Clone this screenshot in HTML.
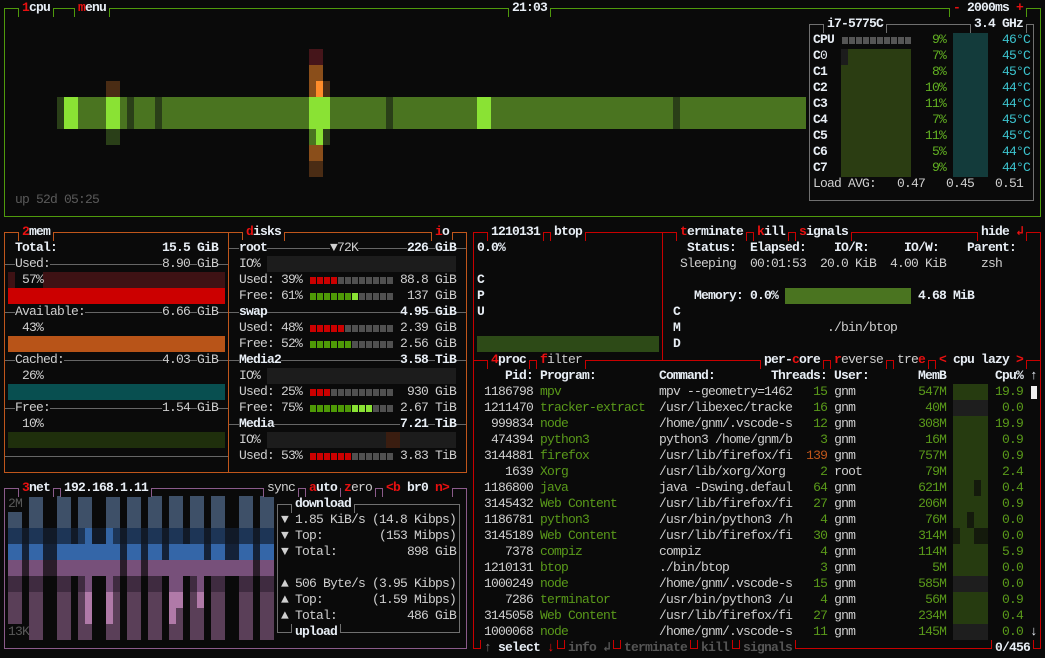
<!DOCTYPE html>
<html><head><meta charset="utf-8"><style>
html,body{margin:0;padding:0;background:#0a0a0a;}
body{width:1045px;height:658px;position:relative;overflow:hidden;}
.t{position:absolute;white-space:pre;font-family:"Liberation Mono","DejaVu Sans Mono",monospace;font-size:13px;letter-spacing:-0.8px;line-height:16px;color:#cfcfcf;}
.w{color:#e8eef5;font-weight:bold;}
.b{font-weight:bold;}
r,.r{color:#e81010;font-weight:bold;}
.gr{color:#5a9a1a;}
.gy{color:#5a5a5a;}
.dim{color:#555;font-weight:bold;}
.cy{color:#3cc4cf;}
.pc{color:#62b022;}
.bg{background:#0a0a0a;}
.box{position:absolute;box-sizing:border-box;border:1px solid;}
.ln{position:absolute;height:1px;}
.vl{position:absolute;width:1px;}
.m{position:absolute;box-sizing:border-box;background:#0a0a0a;border-left:1px solid;border-right:1px solid;height:9px;}
.cg{border-color:#4f9a0c;} .og{border-color:#c0561b;} .pg{border-color:#8b5b8b;} .rg{border-color:#c80000;} .gg{border-color:#707070;}
.rect{position:absolute;}
</style></head><body>

<!-- CPU graph -->
<svg width="1045" height="220" style="position:absolute;left:0;top:0">
<rect x="57" y="97" width="749" height="32" fill="#4a7420"/>
<rect x="57" y="97" width="7" height="32" fill="#2a3f18"/>
<rect x="127" y="97" width="7" height="32" fill="#2a3f18"/>
<rect x="155" y="97" width="7" height="32" fill="#2a3f18"/>
<rect x="386" y="97" width="7" height="32" fill="#2a3f18"/>
<rect x="673" y="97" width="7" height="32" fill="#2a3f18"/>
<rect x="64" y="97" width="14" height="32" fill="#8ae234"/>
<rect x="106" y="97" width="14" height="32" fill="#8ae234"/>
<rect x="477" y="97" width="14" height="32" fill="#8ae234"/>
<rect x="309" y="97" width="21" height="32" fill="#8ae234"/>
<rect x="106" y="81" width="14" height="16" fill="#4a2c14"/>
<rect x="106" y="129" width="14" height="16" fill="#2a3f18"/>
<rect x="309" y="49" width="14" height="16" fill="#45151a"/>
<rect x="309" y="65" width="14" height="16" fill="#8a4e1a"/>
<rect x="309" y="81" width="7" height="16" fill="#8a4e1a"/>
<rect x="316" y="81" width="7" height="16" fill="#ff8c2a"/>
<rect x="323" y="81" width="7" height="16" fill="#4a2c14"/>
<rect x="309" y="129" width="7" height="16" fill="#4a7420"/>
<rect x="316" y="129" width="7" height="16" fill="#8ae234"/>
<rect x="323" y="129" width="7" height="16" fill="#2a3f18"/>
<rect x="309" y="145" width="14" height="16" fill="#8a4e1a"/>
<rect x="309" y="161" width="14" height="16" fill="#4a2c14"/>
<rect x="841" y="49" width="70" height="128" fill="#2b3d12"/>
<rect x="841" y="49" width="7" height="16" fill="#1c1c1c"/>
<rect x="953" y="33" width="35" height="144" fill="#133b3b"/>
<g fill="#555">
<rect x="842" y="37" width="6" height="7"/><rect x="849" y="37" width="6" height="7"/><rect x="856" y="37" width="6" height="7"/><rect x="863" y="37" width="6" height="7"/><rect x="870" y="37" width="6" height="7"/><rect x="877" y="37" width="6" height="7"/><rect x="884" y="37" width="6" height="7"/><rect x="891" y="37" width="6" height="7"/><rect x="898" y="37" width="6" height="7"/><rect x="905" y="37" width="6" height="7"/>
</g>
</svg>

<!-- Net graph -->
<svg width="280" height="160" style="position:absolute;left:0;top:488">
<rect x="8" y="40" width="266" height="16" fill="#111a28"/>
<rect x="8" y="56" width="266" height="16" fill="#142238"/>
<rect x="8" y="72" width="266" height="16" fill="#2a1d2a"/>
<rect x="8" y="24" width="14" height="16" fill="#3e5068"/>
<g fill="#3e5068">
<rect x="29" y="8" width="14" height="32"/><rect x="57" y="8" width="14" height="32"/><rect x="78" y="8" width="14" height="32"/><rect x="106" y="8" width="14" height="32"/><rect x="127" y="8" width="14" height="32"/><rect x="148" y="8" width="14" height="32"/><rect x="169" y="8" width="14" height="32"/><rect x="190" y="8" width="14" height="32"/><rect x="211" y="8" width="14" height="32"/><rect x="239" y="8" width="14" height="32"/><rect x="260" y="8" width="14" height="32"/>
</g>
<g fill="#1d3556">
<rect x="8" y="40" width="14" height="16"/><rect x="29" y="40" width="14" height="16"/><rect x="57" y="40" width="14" height="16"/><rect x="78" y="40" width="14" height="16"/><rect x="106" y="40" width="14" height="16"/><rect x="127" y="40" width="14" height="16"/><rect x="148" y="40" width="14" height="16"/><rect x="169" y="40" width="14" height="16"/><rect x="190" y="40" width="14" height="16"/><rect x="211" y="40" width="14" height="16"/><rect x="239" y="40" width="14" height="16"/><rect x="260" y="40" width="14" height="16"/>
</g>
<rect x="85" y="40" width="7" height="16" fill="#3465a4"/><rect x="106" y="40" width="7" height="16" fill="#3465a4"/>
<g fill="#3466a8">
<rect x="8" y="56" width="14" height="16"/><rect x="29" y="56" width="14" height="16"/><rect x="57" y="56" width="63" height="16"/><rect x="127" y="56" width="14" height="16"/><rect x="148" y="56" width="14" height="16"/><rect x="169" y="56" width="35" height="16"/><rect x="211" y="56" width="14" height="16"/><rect x="239" y="56" width="14" height="16"/><rect x="260" y="56" width="14" height="16"/>
</g>
<g fill="#77507a">
<rect x="8" y="72" width="14" height="16"/><rect x="29" y="72" width="14" height="16"/><rect x="57" y="72" width="63" height="16"/><rect x="127" y="72" width="14" height="16"/><rect x="148" y="72" width="105" height="16"/><rect x="260" y="72" width="14" height="16"/>
</g>
<g fill="#3f2b40">
<rect x="8" y="88" width="14" height="16"/><rect x="29" y="88" width="14" height="16"/><rect x="57" y="88" width="14" height="16"/><rect x="78" y="88" width="14" height="16"/><rect x="106" y="88" width="14" height="16"/><rect x="127" y="88" width="14" height="16"/><rect x="148" y="88" width="14" height="16"/><rect x="169" y="88" width="14" height="16"/><rect x="190" y="88" width="14" height="16"/><rect x="211" y="88" width="14" height="16"/><rect x="239" y="88" width="14" height="16"/><rect x="260" y="88" width="14" height="16"/>
</g>
<rect x="85" y="88" width="7" height="16" fill="#77507a"/><rect x="106" y="88" width="7" height="16" fill="#77507a"/><rect x="169" y="88" width="14" height="16" fill="#77507a"/><rect x="197" y="88" width="7" height="16" fill="#77507a"/>
<g fill="#5a3f58">
<rect x="8" y="104" width="14" height="32"/><rect x="29" y="104" width="14" height="48"/><rect x="57" y="104" width="14" height="48"/><rect x="78" y="104" width="14" height="48"/><rect x="106" y="104" width="14" height="48"/><rect x="127" y="104" width="14" height="48"/><rect x="148" y="104" width="14" height="48"/><rect x="169" y="104" width="14" height="48"/><rect x="190" y="104" width="14" height="48"/><rect x="211" y="104" width="14" height="48"/><rect x="239" y="104" width="14" height="48"/><rect x="260" y="104" width="14" height="48"/>
</g>
<g fill="#b07aa8">
<rect x="85" y="104" width="7" height="32"/><rect x="106" y="104" width="7" height="32"/><rect x="169" y="104" width="14" height="16"/><rect x="169" y="120" width="7" height="16"/><rect x="197" y="104" width="7" height="16"/>
</g>
</svg>

<!-- Boxes and lines -->
<div class="box cg" style="left:4px;top:8px;width:1037px;height:209px"></div>
<div class="box gg" style="left:809px;top:24px;width:225px;height:177px"></div>
<div class="box og" style="left:4px;top:232px;width:463px;height:241px"></div>
<div class="vl" style="left:228px;top:232px;height:241px;background:#c0561b"></div>
<div class="box pg" style="left:4px;top:488px;width:463px;height:161px"></div>
<div class="box gg" style="left:277px;top:504px;width:183px;height:129px"></div>
<div class="box rg" style="left:473px;top:232px;width:568px;height:417px"></div>
<div class="vl" style="left:662px;top:232px;height:129px;background:#c80000"></div>
<div class="ln" style="left:473px;top:360px;width:568px;background:#c80000"></div>

<div class="ln" style="left:5px;top:264px;width:223px;background:#666"></div>
<div class="ln" style="left:5px;top:312px;width:223px;background:#666"></div>
<div class="ln" style="left:5px;top:360px;width:223px;background:#666"></div>
<div class="ln" style="left:5px;top:408px;width:223px;background:#666"></div>
<div class="ln" style="left:5px;top:456px;width:223px;background:#666"></div>
<div class="ln" style="left:229px;top:248px;width:237px;background:#666"></div>
<div class="ln" style="left:229px;top:312px;width:237px;background:#666"></div>
<div class="ln" style="left:229px;top:360px;width:237px;background:#666"></div>
<div class="ln" style="left:229px;top:424px;width:237px;background:#666"></div>

<!-- title masks -->
<div class="m cg" style="left:18px;top:8px;width:36px"></div>
<div class="m cg" style="left:74px;top:8px;width:36px"></div>
<div class="m cg" style="left:508px;top:8px;width:43px"></div>
<div class="m cg" style="left:949px;top:8px;width:78px"></div>
<div class="m gg" style="left:823px;top:24px;width:64px"></div>
<div class="m gg" style="left:970px;top:24px;width:57px"></div>
<div class="m og" style="left:18px;top:232px;width:36px"></div>
<div class="m og" style="left:242px;top:232px;width:43px"></div>
<div class="m og" style="left:431px;top:232px;width:22px"></div>
<div class="m rg" style="left:487px;top:232px;width:57px"></div>
<div class="m rg" style="left:550px;top:232px;width:36px"></div>
<div class="m rg" style="left:676px;top:232px;width:71px"></div>
<div class="m rg" style="left:753px;top:232px;width:36px"></div>
<div class="m rg" style="left:795px;top:232px;width:57px"></div>
<div class="m rg" style="left:977px;top:232px;width:50px"></div>
<div class="m rg" style="left:487px;top:360px;width:43px"></div>
<div class="m rg" style="left:536px;top:360px;width:50px"></div>
<div class="m rg" style="left:760px;top:360px;width:64px"></div>
<div class="m rg" style="left:830px;top:360px;width:57px"></div>
<div class="m rg" style="left:893px;top:360px;width:36px"></div>
<div class="m rg" style="left:935px;top:360px;width:92px"></div>
<div class="m pg" style="left:18px;top:488px;width:36px"></div>
<div class="m pg" style="left:60px;top:488px;width:92px"></div>
<div class="m pg" style="left:263px;top:488px;width:36px"></div>
<div class="m pg" style="left:305px;top:488px;width:36px"></div>
<div class="m pg" style="left:340px;top:488px;width:36px"></div>
<div class="m pg" style="left:382px;top:488px;width:71px"></div>
<div class="m gg" style="left:291px;top:504px;width:64px"></div>
<div class="m gg" style="left:291px;top:624px;width:50px"></div>
<div class="m rg" style="left:480px;top:640px;width:78px"></div>
<div class="m rg" style="left:564px;top:640px;width:50px"></div>
<div class="m rg" style="left:620px;top:640px;width:71px"></div>
<div class="m rg" style="left:697px;top:640px;width:36px"></div>
<div class="m rg" style="left:739px;top:640px;width:57px"></div>
<div class="m rg" style="left:991px;top:640px;width:43px"></div>

<!-- mem bars -->
<div class="rect" style="left:8px;top:272px;width:217px;height:16px;background:#3e1214"></div>
<div class="rect" style="left:15px;top:272px;width:28px;height:16px;background:#0a0a0a"></div>
<div class="rect" style="left:8px;top:288px;width:217px;height:16px;background:#cc0000"></div>
<div class="rect" style="left:8px;top:336px;width:217px;height:16px;background:#b85418"></div>
<div class="rect" style="left:8px;top:384px;width:217px;height:16px;background:#084f50"></div>
<div class="rect" style="left:8px;top:432px;width:217px;height:16px;background:#1f2f0c"></div>
<!-- disk IO bars -->
<div class="rect" style="left:267px;top:256px;width:189px;height:16px;background:#1c1c1c"></div>
<div class="rect" style="left:267px;top:368px;width:189px;height:16px;background:#1c1c1c"></div>
<div class="rect" style="left:267px;top:432px;width:189px;height:16px;background:#1c1c1c"></div>
<div class="rect" style="left:386px;top:432px;width:14px;height:16px;background:#3a1d10"></div>
<!-- disk meters -->
<svg width="1045" height="658" style="position:absolute;left:0;top:0;pointer-events:none">
<defs>
<g id="row12"><rect x="310" y="0" width="6" height="7"/><rect x="317" y="0" width="6" height="7"/><rect x="324" y="0" width="6" height="7"/><rect x="331" y="0" width="6" height="7"/><rect x="338" y="0" width="6" height="7"/><rect x="345" y="0" width="6" height="7"/><rect x="352" y="0" width="6" height="7"/><rect x="359" y="0" width="6" height="7"/><rect x="366" y="0" width="6" height="7"/><rect x="373" y="0" width="6" height="7"/><rect x="380" y="0" width="6" height="7"/><rect x="387" y="0" width="6" height="7"/></g>
</defs>
<use href="#row12" y="277" fill="#505050"/>
<use href="#row12" y="293" fill="#505050"/>
<use href="#row12" y="325" fill="#505050"/>
<use href="#row12" y="341" fill="#505050"/>
<use href="#row12" y="389" fill="#505050"/>
<use href="#row12" y="405" fill="#505050"/>
<use href="#row12" y="453" fill="#505050"/>
<g fill="#cc0000"><rect x="310" y="277" width="6" height="7"/><rect x="317" y="277" width="6" height="7"/><rect x="324" y="277" width="6" height="7"/><rect x="331" y="277" width="6" height="7"/></g>
<g fill="#4e9a06"><rect x="310" y="293" width="6" height="7"/><rect x="317" y="293" width="6" height="7"/><rect x="324" y="293" width="6" height="7"/><rect x="331" y="293" width="6" height="7"/><rect x="338" y="293" width="6" height="7"/><rect x="345" y="293" width="6" height="7"/></g>
<rect x="352" y="293" width="6" height="7" fill="#8ae234"/>
<g fill="#cc0000"><rect x="310" y="325" width="6" height="7"/><rect x="317" y="325" width="6" height="7"/><rect x="324" y="325" width="6" height="7"/><rect x="331" y="325" width="6" height="7"/><rect x="338" y="325" width="6" height="7"/></g>
<g fill="#4e9a06"><rect x="310" y="341" width="6" height="7"/><rect x="317" y="341" width="6" height="7"/><rect x="324" y="341" width="6" height="7"/><rect x="331" y="341" width="6" height="7"/><rect x="338" y="341" width="6" height="7"/><rect x="345" y="341" width="6" height="7"/></g>
<g fill="#cc0000"><rect x="310" y="389" width="6" height="7"/><rect x="317" y="389" width="6" height="7"/><rect x="324" y="389" width="6" height="7"/></g>
<g fill="#4e9a06"><rect x="310" y="405" width="6" height="7"/><rect x="317" y="405" width="6" height="7"/><rect x="324" y="405" width="6" height="7"/><rect x="331" y="405" width="6" height="7"/><rect x="338" y="405" width="6" height="7"/><rect x="345" y="405" width="6" height="7"/></g>
<g fill="#8ae234"><rect x="352" y="405" width="6" height="7"/><rect x="359" y="405" width="6" height="7"/><rect x="366" y="405" width="6" height="7"/></g>
<g fill="#cc0000"><rect x="310" y="453" width="6" height="7"/><rect x="317" y="453" width="6" height="7"/><rect x="324" y="453" width="6" height="7"/><rect x="331" y="453" width="6" height="7"/><rect x="338" y="453" width="6" height="7"/><rect x="345" y="453" width="6" height="7"/></g>
</svg>

<!-- proc bars -->
<div class="rect" style="left:477px;top:336px;width:182px;height:16px;background:#2d4a17"></div>
<div class="rect" style="left:785px;top:288px;width:126px;height:16px;background:#4a7420"></div>
<div class="rect" style="left:953px;top:384px;width:35px;height:256px;background:#263b10"></div>
<div class="rect" style="left:953px;top:400px;width:35px;height:16px;background:#1e1e1e"></div>
<div class="rect" style="left:953px;top:576px;width:35px;height:16px;background:#1e1e1e"></div>
<div class="rect" style="left:953px;top:624px;width:35px;height:16px;background:#1e1e1e"></div>
<div class="rect" style="left:974px;top:480px;width:7px;height:16px;background:#141a0c"></div>
<div class="rect" style="left:967px;top:512px;width:7px;height:16px;background:#141a0c"></div>
<div class="rect" style="left:953px;top:528px;width:7px;height:16px;background:#141a0c"></div>
<div class="rect" style="left:974px;top:528px;width:14px;height:16px;background:#141a0c"></div>
<div class="rect" style="left:1031px;top:386px;width:6px;height:13px;background:#f0f0f0"></div>

<!-- CPU text -->
<div class="t" style="left:22px;top:0"><r>1</r><span class="w">cpu</span></div>
<div class="t w" style="left:78px;top:0"><r>m</r>enu</div>
<div class="t w" style="left:512px;top:0">21:03</div>
<div class="t w" style="left:953px;top:0"><r>-</r> 2000ms <r>+</r></div>
<div class="t" style="left:15px;top:192px;color:#5a5a5a">up 52d 05:25</div>
<div class="t w" style="left:827px;top:16px">i7-5775C</div>
<div class="t w" style="left:974px;top:16px">3.4 GHz</div>
<div class="t b" style="left:813px;top:32px;color:#e8eef5">CPU</div>
<div class="t b" style="left:813px;top:48px;color:#e8eef5">C<span style="font-weight:normal">0</span></div>
<div class="t b" style="left:813px;top:64px;color:#e8eef5">C1</div>
<div class="t b" style="left:813px;top:80px;color:#e8eef5">C2</div>
<div class="t b" style="left:813px;top:96px;color:#e8eef5">C3</div>
<div class="t b" style="left:813px;top:112px;color:#e8eef5">C4</div>
<div class="t b" style="left:813px;top:128px;color:#e8eef5">C5</div>
<div class="t b" style="left:813px;top:144px;color:#e8eef5">C6</div>
<div class="t b" style="left:813px;top:160px;color:#e8eef5">C7</div>
<div class="t pc" style="left:918px;top:32px">  9%
  7%
  8%
 10%
 11%
  7%
 11%
  5%
  9%</div>
<div class="t cy" style="left:1002px;top:32px">46°C
45°C
45°C
44°C
44°C
45°C
45°C
44°C
44°C</div>
<div class="t" style="left:813px;top:176px">Load AVG:   0.47   0.45   0.51</div>

<!-- MEM text -->
<div class="t" style="left:22px;top:224px"><r>2</r><span class="w">mem</span></div>
<div class="t w" style="left:246px;top:224px"><r>d</r>isks</div>
<div class="t w" style="left:435px;top:224px"><r>i</r>o</div>
<div class="t w" style="left:15px;top:240px">Total:</div>
<div class="t w" style="left:162px;top:240px">15.5 GiB</div>
<div class="t bg" style="left:15px;top:256px">Used:</div>
<div class="t bg" style="left:162px;top:256px">8.90</div><div class="t bg" style="left:197px;top:256px">GiB</div>
<div class="t" style="left:22px;top:272px">57%</div>
<div class="t bg" style="left:15px;top:304px">Available:</div>
<div class="t bg" style="left:162px;top:304px">6.66</div><div class="t bg" style="left:197px;top:304px">GiB</div>
<div class="t" style="left:22px;top:320px">43%</div>
<div class="t bg" style="left:15px;top:352px">Cached:</div>
<div class="t bg" style="left:162px;top:352px">4.03</div><div class="t bg" style="left:197px;top:352px">GiB</div>
<div class="t" style="left:22px;top:368px">26%</div>
<div class="t bg" style="left:15px;top:400px">Free:</div>
<div class="t bg" style="left:162px;top:400px">1.54</div><div class="t bg" style="left:197px;top:400px">GiB</div>
<div class="t" style="left:22px;top:416px">10%</div>

<!-- DISKS text -->
<div class="t w bg" style="left:239px;top:240px">root</div>
<div class="t bg" style="left:330px;top:240px">▼72K</div>
<div class="t w bg" style="left:407px;top:240px">226</div><div class="t w bg" style="left:435px;top:240px">GiB</div>
<div class="t" style="left:239px;top:256px">IO%</div>
<div class="t" style="left:239px;top:272px">Used: 39%</div><div class="t" style="left:400px;top:272px">88.8 GiB</div>
<div class="t" style="left:239px;top:288px">Free: 61%</div><div class="t" style="left:407px;top:288px">137 GiB</div>
<div class="t w bg" style="left:239px;top:304px">swap</div>
<div class="t w bg" style="left:400px;top:304px">4.95</div><div class="t w bg" style="left:435px;top:304px">GiB</div>
<div class="t" style="left:239px;top:320px">Used: 48%</div><div class="t" style="left:400px;top:320px">2.39 GiB</div>
<div class="t" style="left:239px;top:336px">Free: 52%</div><div class="t" style="left:400px;top:336px">2.56 GiB</div>
<div class="t w bg" style="left:239px;top:352px">Media2</div>
<div class="t w bg" style="left:400px;top:352px">3.58</div><div class="t w bg" style="left:435px;top:352px">TiB</div>
<div class="t" style="left:239px;top:368px">IO%</div>
<div class="t" style="left:239px;top:384px">Used: 25%</div><div class="t" style="left:407px;top:384px">930 GiB</div>
<div class="t" style="left:239px;top:400px">Free: 75%</div><div class="t" style="left:400px;top:400px">2.67 TiB</div>
<div class="t w bg" style="left:239px;top:416px">Media</div>
<div class="t w bg" style="left:400px;top:416px">7.21</div><div class="t w bg" style="left:435px;top:416px">TiB</div>
<div class="t" style="left:239px;top:432px">IO%</div>
<div class="t" style="left:239px;top:448px">Used: 53%</div><div class="t" style="left:400px;top:448px">3.83 TiB</div>

<!-- NET text -->
<div class="t" style="left:22px;top:480px"><r>3</r><span class="w">net</span></div>
<div class="t w" style="left:64px;top:480px">192.168.1.11</div>
<div class="t" style="left:267px;top:480px">sync</div>
<div class="t w" style="left:309px;top:480px"><r>a</r>uto</div>
<div class="t" style="left:344px;top:480px"><r>z</r>ero</div>
<div class="t w" style="left:386px;top:480px"><r>&lt;b</r> br0 <r>n&gt;</r></div>
<div class="t gy" style="left:8px;top:496px">2M</div>
<div class="t gy" style="left:8px;top:624px">13K</div>
<div class="t w" style="left:295px;top:496px">download</div>
<div class="t" style="left:281px;top:512px">▼</div><div class="t" style="left:295px;top:512px">1.85 KiB/s (14.8 Kibps)</div>
<div class="t" style="left:281px;top:528px">▼</div><div class="t" style="left:295px;top:528px">Top:</div><div class="t" style="left:379px;top:528px">(153 Mibps)</div>
<div class="t" style="left:281px;top:544px">▼</div><div class="t" style="left:295px;top:544px">Total:</div><div class="t" style="left:407px;top:544px">898 GiB</div>
<div class="t" style="left:281px;top:576px">▲</div><div class="t" style="left:295px;top:576px">506 Byte/s (3.95 Kibps)</div>
<div class="t" style="left:281px;top:592px">▲</div><div class="t" style="left:295px;top:592px">Top:</div><div class="t" style="left:372px;top:592px">(1.59 Mibps)</div>
<div class="t" style="left:281px;top:608px">▲</div><div class="t" style="left:295px;top:608px">Total:</div><div class="t" style="left:407px;top:608px">486 GiB</div>
<div class="t w" style="left:295px;top:624px">upload</div>

<!-- PROC detail -->
<div class="t w" style="left:491px;top:224px">1210131</div>
<div class="t w" style="left:554px;top:224px">btop</div>
<div class="t w" style="left:680px;top:224px"><r>t</r>erminate</div>
<div class="t w" style="left:757px;top:224px"><r>k</r>ill</div>
<div class="t w" style="left:799px;top:224px"><r>s</r>ignals</div>
<div class="t w" style="left:981px;top:224px">hide</div>
<div class="t r" style="left:1016px;top:224px">↲</div>
<div class="t w" style="left:477px;top:240px">0.0%</div>
<div class="t w" style="left:477px;top:272px">C</div>
<div class="t w" style="left:477px;top:288px">P</div>
<div class="t w" style="left:477px;top:304px">U</div>
<div class="t w" style="left:687px;top:240px">Status:</div>
<div class="t w" style="left:750px;top:240px">Elapsed:</div>
<div class="t w" style="left:834px;top:240px">IO/R:</div>
<div class="t w" style="left:904px;top:240px">IO/W:</div>
<div class="t w" style="left:967px;top:240px">Parent:</div>
<div class="t" style="left:680px;top:256px">Sleeping</div>
<div class="t" style="left:750px;top:256px">00:01:53</div>
<div class="t" style="left:820px;top:256px">20.0 KiB</div>
<div class="t" style="left:890px;top:256px">4.00 KiB</div>
<div class="t" style="left:981px;top:256px">zsh</div>
<div class="t w" style="left:694px;top:288px">Memory:</div>
<div class="t w" style="left:750px;top:288px">0.0%</div>
<div class="t w" style="left:918px;top:288px">4.68 MiB</div>
<div class="t w" style="left:673px;top:304px">C</div>
<div class="t w" style="left:673px;top:320px">M</div>
<div class="t w" style="left:673px;top:336px">D</div>
<div class="t" style="left:827px;top:320px">./bin/btop</div>

<!-- PROC list -->
<div class="t w" style="left:491px;top:352px"><r>4</r>proc</div>
<div class="t" style="left:540px;top:352px"><r>f</r>ilter</div>
<div class="t w" style="left:764px;top:352px">per-<r>c</r>ore</div>
<div class="t" style="left:834px;top:352px"><r>r</r>everse</div>
<div class="t" style="left:897px;top:352px">tre<r>e</r></div>
<div class="t w" style="left:939px;top:352px"><r>&lt;</r> cpu lazy <r>&gt;</r></div>
<div class="t w" style="left:505px;top:368px">Pid:</div>
<div class="t w" style="left:540px;top:368px">Program:</div>
<div class="t w" style="left:659px;top:368px">Command:</div>
<div class="t w" style="left:771px;top:368px">Threads:</div>
<div class="t w" style="left:834px;top:368px">User:</div>
<div class="t w" style="left:918px;top:368px">MemB</div>
<div class="t w" style="left:995px;top:368px">Cpu%</div>
<div class="t w" style="left:1030px;top:368px">↑</div>
<div class="t" style="left:484px;top:384px">1186798 <span class="gr">mpv              </span>mpv --geometry=1462<span class="gr">   15</span> gnm         <span class="gr">547M</span>
1211470 <span class="gr">tracker-extract  </span>/usr/libexec/tracke<span class="gr">   16</span> gnm         <span class="gr"> 40M</span>
 999834 <span class="gr">node             </span>/home/gnm/.vscode-s<span class="gr">   12</span> gnm         <span class="gr">308M</span>
 474394 <span class="gr">python3          </span>python3 /home/gnm/b<span class="gr">    3</span> gnm         <span class="gr"> 16M</span>
3144881 <span class="gr">firefox          </span>/usr/lib/firefox/fi<span style="color:#c0561a">  139</span> gnm         <span class="gr">757M</span>
   1639 <span class="gr">Xorg             </span>/usr/lib/xorg/Xorg <span class="gr">    2</span> root        <span class="gr"> 79M</span>
1186800 <span class="gr">java             </span>java -Dswing.defaul<span class="gr">   64</span> gnm         <span class="gr">621M</span>
3145432 <span class="gr">Web Content      </span>/usr/lib/firefox/fi<span class="gr">   27</span> gnm         <span class="gr">206M</span>
1186781 <span class="gr">python3          </span>/usr/bin/python3 /h<span class="gr">    4</span> gnm         <span class="gr"> 76M</span>
3145189 <span class="gr">Web Content      </span>/usr/lib/firefox/fi<span class="gr">   30</span> gnm         <span class="gr">314M</span>
   7378 <span class="gr">compiz           </span>compiz             <span class="gr">    4</span> gnm         <span class="gr">114M</span>
1210131 <span class="gr">btop             </span>./bin/btop         <span class="gr">    3</span> gnm         <span class="gr">  5M</span>
1000249 <span class="gr">node             </span>/home/gnm/.vscode-s<span class="gr">   15</span> gnm         <span class="gr">585M</span>
   7286 <span class="gr">terminator       </span>/usr/bin/python3 /u<span class="gr">    4</span> gnm         <span class="gr"> 56M</span>
3145058 <span class="gr">Web Content      </span>/usr/lib/firefox/fi<span class="gr">   27</span> gnm         <span class="gr">234M</span>
1000068 <span class="gr">node             </span>/home/gnm/.vscode-s<span class="gr">   11</span> gnm         <span class="gr">145M</span></div>
<div class="t gr" style="left:995px;top:384px">19.9
 0.0
19.9
 0.9
 0.9
 2.4
 0.4
 0.9
 0.0
 0.0
 5.9
 0.0
 0.0
 0.9
 0.4
 0.0</div>
<div class="t w" style="left:1030px;top:624px">↓</div>
<div class="t" style="left:484px;top:640px;color:#777">↑</div>
<div class="t w" style="left:498px;top:640px">select</div>
<div class="t r" style="left:547px;top:640px">↓</div>
<div class="t dim" style="left:568px;top:640px">info</div>
<div class="t dim" style="left:603px;top:640px">↲</div>
<div class="t dim" style="left:624px;top:640px">terminate</div>
<div class="t dim" style="left:701px;top:640px">kill</div>
<div class="t dim" style="left:743px;top:640px">signals</div>
<div class="t w" style="left:995px;top:640px">0/456</div>
</body></html>
